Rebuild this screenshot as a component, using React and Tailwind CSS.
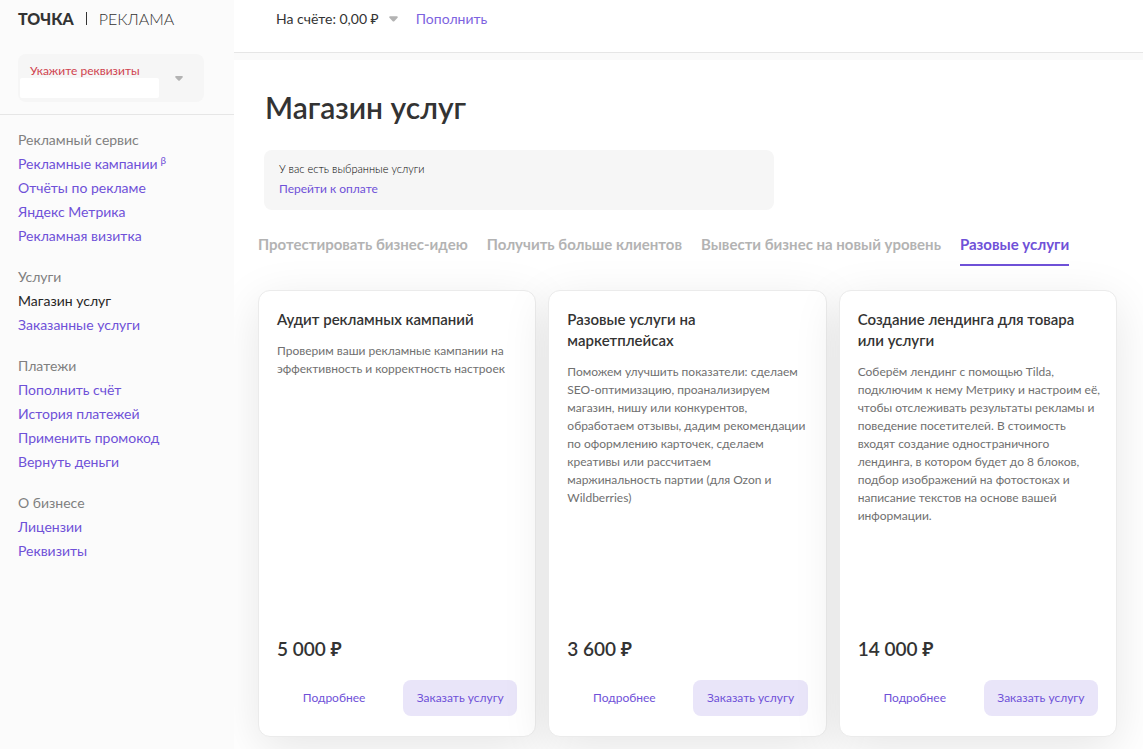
const MENU = [
  {
    title: 'Рекламный сервис',
    items: [
      { label: 'Рекламные кампании', mark: 'β' },
      { label: 'Отчёты по рекламе' },
      { label: 'Яндекс Метрика' },
      { label: 'Рекламная визитка' },
    ],
  },
  {
    title: 'Услуги',
    items: [{ label: 'Магазин услуг', active: true }, { label: 'Заказанные услуги' }],
  },
  {
    title: 'Платежи',
    items: [
      { label: 'Пополнить счёт' },
      { label: 'История платежей' },
      { label: 'Применить промокод' },
      { label: 'Вернуть деньги' },
    ],
  },
  {
    title: 'О бизнесе',
    items: [{ label: 'Лицензии' }, { label: 'Реквизиты' }],
  },
]

const TABS = [
  'Протестировать бизнес-идею',
  'Получить больше клиентов',
  'Вывести бизнес на новый уровень',
  'Разовые услуги',
]

const SERVICES = [
  {
    title: 'Аудит рекламных кампаний',
    text: 'Проверим ваши рекламные кампании на\nэффективность и корректность настроек',
    price: '5 000 ₽',
  },
  {
    title: 'Разовые услуги на\nмаркетплейсах',
    text: 'Поможем улучшить показатели: сделаем\nSEO-оптимизацию, проанализируем\nмагазин, нишу или конкурентов,\nобработаем отзывы, дадим рекомендации\nпо оформлению карточек, сделаем\nкреативы или рассчитаем\nмаржинальность партии (для Ozon и\nWildberries)',
    price: '3 600 ₽',
  },
  {
    title: 'Создание лендинга для товара\nили услуги',
    text: 'Соберём лендинг с помощью Tilda,\nподключим к нему Метрику и настроим её,\nчтобы отслеживать результаты рекламы и\nповедение посетителей. В стоимость\nвходят создание одностраничного\nлендинга, в котором будет до 8 блоков,\nподбор изображений на фотостоках и\nнаписание текстов на основе вашей\nинформации.',
    price: '14 000 ₽',
  },
]

function Caret({ className }) {
  return (
    <svg viewBox="0 0 10 6" className={className} fill="#b3b3b3" aria-hidden="true">
      <path d="M1.2 0h7.6c.9 0 1.3 1 .7 1.6L5.9 5.4a1.2 1.2 0 0 1-1.8 0L.5 1.6C-.1 1 .3 0 1.2 0z" />
    </svg>
  )
}

function Sidebar() {
  return (
    <aside className="w-[234px] shrink-0 bg-[#fbfbfb]">
      <div className="border-b border-[#e6e6e6] px-[18px] pt-[7px] pb-3">
        <a href="#" className="flex items-center text-[16px] leading-[23px] text-[#333]">
          <span className="font-black">ТОЧКА</span>
          <span className="mx-3 h-[13px] w-px bg-[#333]" />
          <span className="font-light">РЕКЛАМА</span>
        </a>
        <button className="mt-6 flex h-12 w-full max-w-[186px] items-center justify-between rounded-lg bg-[#f6f6f6] pr-[21px] pl-[2px] text-left">
          <span className="flex flex-col pb-1">
            <span className="h-6 pt-[10px] pl-[10px] text-[12px] leading-[14px] text-[#d0434f]">
              Укажите реквизиты
            </span>
            <span className="h-5 w-[139px] rounded-xs bg-white" />
          </span>
          <Caret className="h-[5px] w-2" />
        </button>
      </div>
      <nav className="flex flex-col gap-[17px] px-[18px] pt-[13px] text-[14px] leading-6">
        {MENU.map((group) => (
          <section key={group.title}>
            <h2 className="text-[#808080]">{group.title}</h2>
            <ul>
              {group.items.map((item) => (
                <li key={item.label}>
                  <a href="#" className={item.active ? 'text-[#262626]' : 'text-[#6f51d8]'}>
                    {item.label}
                    {item.mark && <sup className="ml-[3px] text-[10px]">{item.mark}</sup>}
                  </a>
                </li>
              ))}
            </ul>
          </section>
        ))}
      </nav>
    </aside>
  )
}

function ServiceCard({ title, text, price }) {
  return (
    <article className="flex min-h-[447px] flex-col rounded-xl border border-[#ebebeb] bg-white px-[18px] pt-[18px] pb-5 shadow-[0_12px_48px_rgba(0,0,0,0.1)]">
      <h3 className="text-[15px] leading-[21px] font-semibold whitespace-pre-line text-[#333]">{title}</h3>
      <p className="-mr-3 mt-3 text-[12px] leading-[18px] whitespace-pre-line text-[#707070]">{text}</p>
      <p className="mt-auto text-[19px] leading-6 font-semibold text-[#333]">{price}</p>
      <div className="mt-[19px] grid grid-cols-2 gap-3 text-[12px] text-[#6f51d8]">
        <button className="h-9 rounded-lg">Подробнее</button>
        <button className="h-9 rounded-lg bg-[#e9e5f9]">Заказать услугу</button>
      </div>
    </article>
  )
}

export default function App() {
  return (
    <div className="flex min-h-screen bg-white font-['Lato','Noto_Sans',sans-serif]">
      <Sidebar />
      <div className="min-w-0 flex-1 overflow-hidden">
        <header className="flex h-[53px] border-b border-[#e6e6e6] px-[42px] pt-2 text-[14px] leading-[22px]">
          <button className="flex h-[22px] items-center gap-[10px] text-[#333]">
            На счёте: 0,00 ₽
            <Caret className="h-[6px] w-[9px]" />
          </button>
          <a href="#" className="ml-[18px] text-[#7d63e0]">
            Пополнить
          </a>
        </header>
        <div className="h-[7px] bg-[#fafafa]" />
        <main className="pt-[28px] pr-[26px] pb-3 pl-6">
          <h1 className="px-[7px] text-[30px] leading-[38px] font-semibold text-[#333]">Магазин услуг</h1>
          <div className="mt-6 ml-[6px] max-w-[510px] rounded-lg bg-[#f6f6f6] px-[15px] pt-[9px] pb-[11px]">
            <p className="text-[11px] leading-5 font-light text-black">У вас есть выбранные услуги</p>
            <a href="#" className="block text-[12px] leading-5 text-[#6f51d8]">
              Перейти к оплате
            </a>
          </div>
          <div role="tablist" className="mt-[23px] flex gap-[19px] text-[15px] leading-[22px] font-bold">
            {TABS.map((tab, i) => (
              <button
                key={tab}
                role="tab"
                aria-selected={i === 3}
                className={
                  i === 3
                    ? 'border-b-2 border-[#6f51d8] pb-[9px] whitespace-nowrap text-[#6f51d8]'
                    : 'border-b-2 border-transparent pb-[9px] whitespace-nowrap text-[#b3b3b3]'
                }
              >
                {tab}
              </button>
            ))}
          </div>
          <div className="mt-6 grid grid-cols-3 gap-3">
            {SERVICES.map((service) => (
              <ServiceCard key={service.title} {...service} />
            ))}
          </div>
        </main>
      </div>
    </div>
  )
}
